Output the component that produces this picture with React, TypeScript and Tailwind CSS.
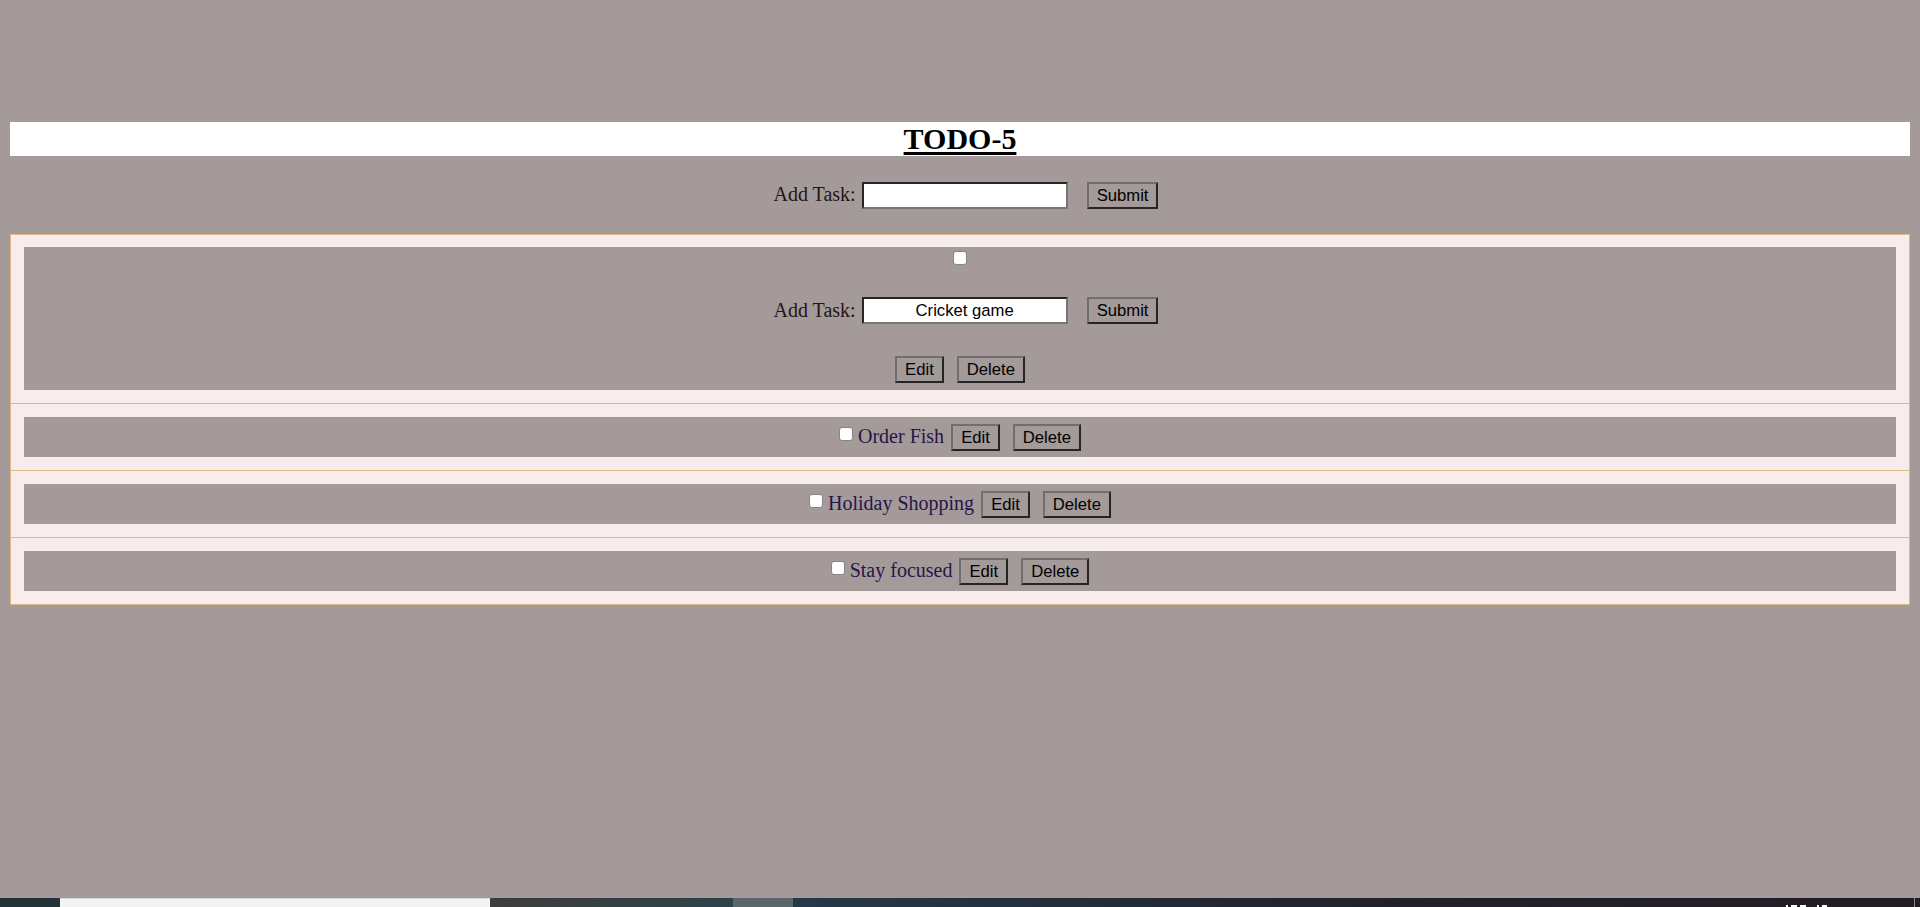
import React from "react";

const btn =
  "h-[27px] px-[8px] bg-[#a39a99] border-2 border-t-[#6f6f6f] border-l-[#6f6f6f] border-b-[#252525] border-r-[#252525] text-[16.67px] leading-[19px] text-black font-['Liberation_Sans',Arial,sans-serif]";

const inputCls =
  "w-[206px] h-[27px] bg-white border-2 border-t-[#262626] border-l-[#262626] border-b-[#767676] border-r-[#767676] text-center text-[16.67px] text-black font-['Liberation_Sans',Arial,sans-serif] outline-none";

function Check({ extra = "" }: { extra?: string }) {
  return (
    <input
      type="checkbox"
      className={`appearance-none m-0 w-[14px] h-[14px] shrink-0 bg-white border border-[#858585] rounded-[3px] ${extra}`}
    />
  );
}

function AddRow({ value, h }: { value: string; h: string }) {
  return (
    <div className={`flex items-center justify-center pl-[12px] ${h}`}>
      <span className="text-[20px] text-[#221616] mr-[6px] -mt-[2px]">Add Task:</span>
      <input className={inputCls} defaultValue={value} />
      <button className={`${btn} ml-[19px]`}>Submit</button>
    </div>
  );
}

function TaskRow({ text }: { text: string }) {
  return (
    <div className="h-[40px] bg-[#a39a99] flex items-center justify-center">
      <Check extra="mb-[7px]" />
      <span className="ml-[5px] text-[20px] leading-[23px] text-[#25164a] -mt-[2px]">{text}</span>
      <button className={`${btn} ml-[7px]`}>Edit</button>
      <button className={`${btn} ml-[13px]`}>Delete</button>
    </div>
  );
}

export default function App() {
  const tasks = ["Order Fish", "Holiday Shopping", "Stay focused"];
  return (
    <div className="h-[907px] bg-[#a39a99] flex flex-col overflow-hidden font-['Liberation_Serif','Times_New_Roman',serif]">
      <div className="flex-1 px-[10px] pt-[122px]">
        <h2 className="bg-white text-center text-[30px] font-bold underline decoration-[3px] underline-offset-[3px] h-[34px] leading-[34px] text-black">
          TODO-5
        </h2>
        <div className="mt-[25px]">
          <AddRow value="" h="h-[28px]" />
        </div>
        <ul className="mt-[25px] border border-[#deb887] bg-[#f7eded]">
          <li className="px-[13px] pt-[12px] pb-[13px]">
            <div className="h-[143px] bg-[#a39a99] flex flex-col items-center">
              <div className="mt-[4px] h-[14px] flex">
                <Check />
              </div>
              <div className="mt-[32px] w-full">
                <AddRow value="Cricket game" h="h-[27px]" />
              </div>
              <div className="mt-[32px] flex">
                <button className={btn}>Edit</button>
                <button className={`${btn} ml-[13px]`}>Delete</button>
              </div>
            </div>
          </li>
          {tasks.map((t) => (
            <li key={t} className="px-[13px] py-[13px] border-t border-[#deb887]">
              <TaskRow text={t} />
            </li>
          ))}
        </ul>
      </div>
      <div className="h-[9px] flex shrink-0">
        <div className="w-[60px] bg-[#253238]" />
        <div className="w-[430px] bg-[#f3f3f3] border-t border-[#d8d8d8]" />
        <div className="w-[243px] bg-gradient-to-r from-[#3d3d3d] to-[#2e424a]" />
        <div className="w-[60px] bg-[#5b666b]" />
        <div className="flex-1 bg-gradient-to-r from-[#273848] via-[#20222c] to-[#231c24] flex items-end">
          <div className="ml-[993px] mb-0 flex items-end gap-[3px]">
            <div className="w-[2px] h-[2px] bg-white" />
            <div className="w-[6px] h-[2px] bg-white" />
            <div className="w-[6px] h-[2px] bg-white" />
            <div className="w-[2px] h-[2px] bg-white ml-[8px]" />
            <div className="w-[5px] h-[2px] bg-white" />
          </div>
          <div className="ml-auto mr-[5px] w-px h-full bg-[#8a8a8a]" />
        </div>
      </div>
    </div>
  );
}
